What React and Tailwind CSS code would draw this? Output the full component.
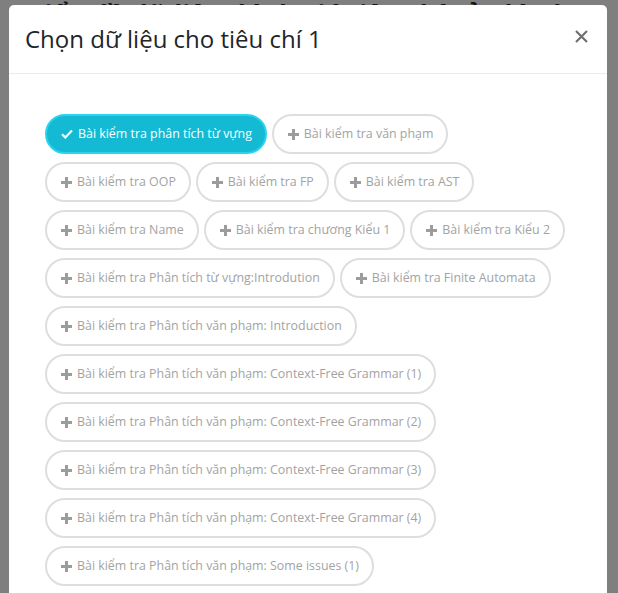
const items = [
   "Bài kiểm tra phân tích từ vựng",
   "Bài kiểm tra văn phạm",
   "Bài kiểm tra OOP",
   "Bài kiểm tra FP",
   "Bài kiểm tra AST",
   "Bài kiểm tra Name",
   "Bài kiểm tra chương Kiểu 1",
   "Bài kiểm tra Kiểu 2",
   "Bài kiểm tra Phân tích từ vựng:Introdution",
   "Bài kiểm tra Finite Automata",
   "Bài kiểm tra Phân tích văn phạm: Introduction",
   "Bài kiểm tra Phân tích văn phạm: Context-Free Grammar (1)",
   "Bài kiểm tra Phân tích văn phạm: Context-Free Grammar (2)",
   "Bài kiểm tra Phân tích văn phạm: Context-Free Grammar (3)",
   "Bài kiểm tra Phân tích văn phạm: Context-Free Grammar (4)",
   "Bài kiểm tra Phân tích văn phạm: Some issues (1)",
   "Bài kiểm tra Phân tích văn phạm: Some issues (2)",
];

const PlusIcon = () => (
   <svg width="11" height="11" viewBox="0 0 11 11" className="shrink-0">
      <rect x="4" y="0" width="3" height="11" fill="#9c9c9c" />
      <rect x="0" y="4" width="11" height="3" fill="#9c9c9c" />
   </svg>
);

const CheckIcon = () => (
   <svg width="12" height="10" viewBox="0 0 12 10" className="shrink-0">
      <path d="M1 5.2 L4.3 8.4 L11 1.6" fill="none" stroke="white" strokeWidth="2.2" />
   </svg>
);

const CloseIcon = () => (
   <svg width="13" height="13" viewBox="0 0 13 13" className="-mt-[6px]">
      <path d="M1 1 L12 12 M12 1 L1 12" stroke="#707070" strokeWidth="2.2" />
   </svg>
);

const App = () => {
   return (
      <div className="relative h-[593px] w-[618px] overflow-hidden bg-[#7f7f7f] font-['Open_Sans',sans-serif]">
         <h2 className="mt-[2px] pl-[27px] text-[26px] leading-[26px] font-bold text-[#141414]">
            Biểu đồ dữ liệu đánh giá tiêu chí của lớp học
         </h2>

         <div className="absolute left-[9px] top-[5px] z-10 w-[598px] rounded-[5px] bg-white">
            <div className="flex h-[69px] items-center justify-between border-b border-[#e9ecef] pl-[16px] pr-[19px]">
               <h1 className="text-[24px] leading-none text-[#212529]">
                  Chọn dữ liệu cho tiêu chí 1
               </h1>
               <CloseIcon />
            </div>

            <div className="flex flex-wrap gap-x-[5px] gap-y-2 px-[36px] pt-[40px]">
               {items.map((item, i) =>
                  i === 0 ? (
                     <button
                        key={item}
                        className="flex h-[40px] items-center gap-[5px] rounded-full border-2 border-[#2ad3ee] bg-[#14b9d3] pl-[14px] pr-[13px] text-[12.4px] text-white"
                     >
                        <CheckIcon />
                        {item}
                     </button>
                  ) : (
                     <button
                        key={item}
                        className="flex h-[40px] items-center gap-[5px] rounded-full border-2 border-[#dedede] bg-white pl-[14px] pr-[13px] text-[12.4px] text-[#a3a3a3]"
                     >
                        <PlusIcon />
                        {item}
                     </button>
                  )
               )}
            </div>
         </div>
      </div>
   );
};

export default App;
